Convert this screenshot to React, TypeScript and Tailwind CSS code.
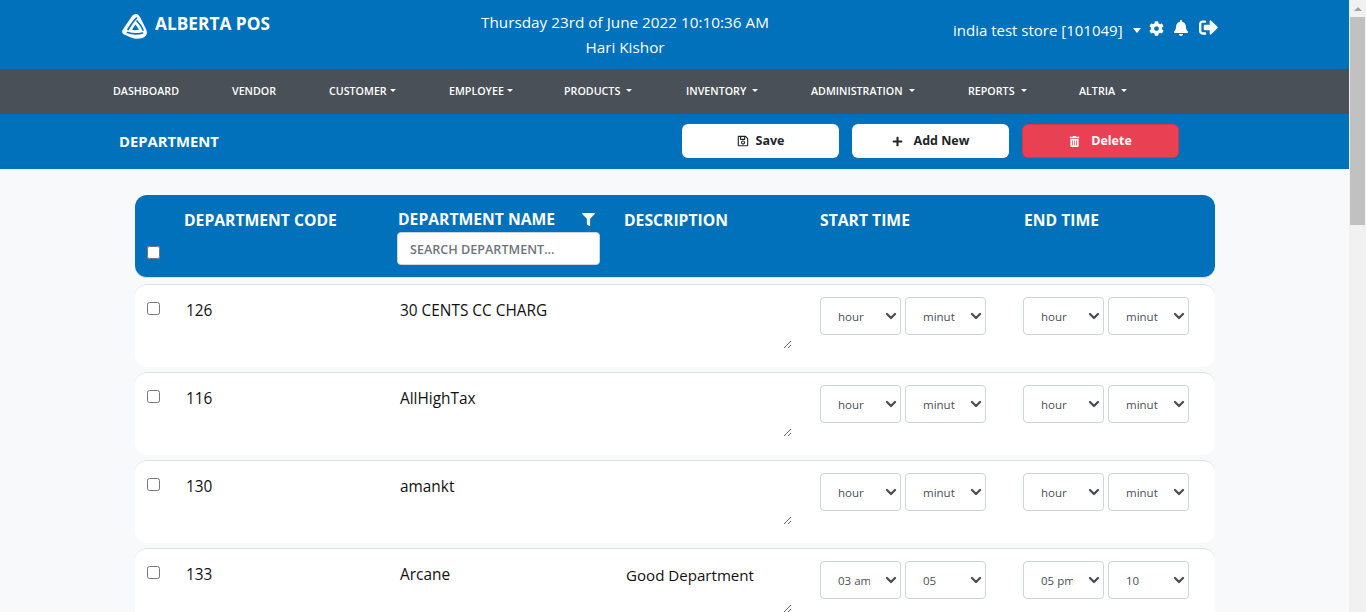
import { useState } from 'react'
import { ChevronDown } from 'lucide-react'
import { FaBell, FaCog, FaFilter, FaPlus, FaRegSave, FaSignOutAlt, FaTrashAlt } from 'react-icons/fa'

const NAV_ITEMS = [
  { label: 'DASHBOARD', width: 'w-[119px]', caret: false },
  { label: 'VENDOR', width: 'w-[97px]', caret: false },
  { label: 'CUSTOMER', width: 'w-[120px]', caret: true, tight: true },
  { label: 'EMPLOYEE', width: 'w-[115px]', caret: true, tight: true },
  { label: 'PRODUCTS', width: 'w-[122px]', caret: true },
  { label: 'INVENTORY', width: 'w-[125px]', caret: true },
  { label: 'ADMINISTRATION', width: 'w-[157px]', caret: true },
  { label: 'REPORTS', width: 'w-[111px]', caret: true },
  { label: 'ALTRIA', width: 'w-[60px]', caret: true },
]

const ROWS = [
  { code: '126', name: '30 CENTS CC CHARG', description: '', start: ['hour', 'minut'], end: ['hour', 'minut'] },
  { code: '116', name: 'AllHighTax', description: '', start: ['hour', 'minut'], end: ['hour', 'minut'] },
  { code: '130', name: 'amankt', description: '', start: ['hour', 'minut'], end: ['hour', 'minut'] },
  { code: '133', name: 'Arcane', description: 'Good Department', start: ['03 am', '05'], end: ['05 pm', '10'] },
]

function Logo() {
  return (
    <svg viewBox="0 0 25 25" className="h-[25px] w-[25px]" aria-hidden="true">
      <path
        fill="#fff"
        d="M14 0 C16 0 17 1.5 18.5 4 L24 15 C25.5 18 25 21 23 22.5 C20 25 14 25.5 9 23.5 L2 20.5 C0 19.5 -0.3 17.5 0.8 15.5 L10 2 C11 0.7 12.5 0 14 0 Z"
      />
      <g fill="none" stroke="#0071ba" strokeWidth="1.7" strokeLinecap="round">
        <path d="M14.5 4 C12 6.5 9 10.5 6 15.5" />
        <path d="M5.5 18.5 C10 20 15 20.5 20.5 19" />
        <path d="M21 16 C19.5 12.5 17.5 9.5 15 7" />
      </g>
      <path fill="#0071ba" d="M13.5 10.5 L17 15.5 C14.5 16.5 12 16.5 10 15.8 Z" />
    </svg>
  )
}

function Caret() {
  return <span className="ml-[3px] mb-[1px] inline-block h-0 w-0 border-x-[3.5px] border-t-[3.5px] border-x-transparent border-t-white align-middle" />
}

function TimeSelect({ value }: { value: string }) {
  return (
    <div className="relative h-[38px] w-[81px]">
      <select
        defaultValue={value}
        className="h-full w-full appearance-none rounded border border-[#ced4da] bg-white pt-px pr-[30px] pl-[17px] text-[11.5px] text-[#495057] outline-none"
      >
        <option>{value}</option>
      </select>
      <ChevronDown
        className="pointer-events-none absolute top-[11px] right-[2px] size-[16px] text-[#495057]"
        strokeWidth={3.5}
        aria-hidden="true"
      />
    </div>
  )
}

function Row({ row }: { row: (typeof ROWS)[number] }) {
  const [description, setDescription] = useState(row.description)
  return (
    <div className="grid h-[83px] shrink-0 grid-cols-[50px_214px_224px_197px_203px_1fr] rounded-xl border-t border-[#dee2e6] bg-white">
      <div className="pt-[17px] pl-[12px]">
        <input type="checkbox" className="block size-[13px]" />
      </div>
      <div className="pt-[14px] pl-px text-[15.4px] text-[#111]">{row.code}</div>
      <div className="pt-[14px] pl-px text-[15.4px] text-[#111]">{row.name}</div>
      <div className="pt-[15px]">
        <textarea
          value={description}
          onChange={(e) => setDescription(e.target.value)}
          className="block h-[49px] w-[169px] bg-transparent pl-[3px] text-[15.1px] leading-[22px] text-[#111] outline-none"
        />
      </div>
      <div className="flex gap-1 pt-[12px]">
        {row.start.map((v, i) => (
          <TimeSelect key={i} value={v} />
        ))}
      </div>
      <div className="flex gap-1 pt-[12px]">
        {row.end.map((v, i) => (
          <TimeSelect key={i} value={v} />
        ))}
      </div>
    </div>
  )
}

export default function App() {
  return (
    <div className="flex h-[612px] w-[1366px] overflow-hidden bg-[#f8f9fb] font-['Open_Sans',sans-serif]">
      <div className="flex min-w-0 flex-1 flex-col">
        {/* top bar */}
        <header className="flex h-[69px] shrink-0 bg-[#0071ba] text-white">
          <div className="flex w-[360px] items-start gap-[8px] pt-[14px] pl-[122px]">
            <Logo />
            <span className="-mt-[3px] text-[17.3px] font-bold">ALBERTA POS</span>
          </div>
          <div className="w-[530px] pt-[10px] text-center text-[15.3px] leading-[25px]">
            <div>Thursday 23rd of June 2022 10:10:36 AM</div>
            <div>Hari Kishor</div>
          </div>
          <div className="flex items-start pt-[19px] pl-[63px] text-[15px]">
            <span className="leading-[23px]">india test store [101049]</span>
            <span className="mt-[9px] ml-[10px] inline-block h-0 w-0 border-x-[4.5px] border-t-[5px] border-x-transparent border-t-white" />
            <FaCog className="mt-[2px] ml-[8px] size-[15px]" />
            <FaBell className="mt-[1px] ml-[9px] size-[16px]" />
            <FaSignOutAlt className="ml-[10px] size-[19px] -translate-y-[1px]" />
          </div>
        </header>

        {/* nav */}
        <nav className="flex h-[45px] shrink-0 items-center bg-[#495057] pl-[113px] text-[10.7px] font-semibold text-white">
          {NAV_ITEMS.map((item) => (
            <div key={item.label} className={`${item.width} flex shrink-0 items-center`}>
              {item.label}
              {item.caret && (
                <span className={`flex ${item.tight ? '' : 'ml-[3px]'}`}>
                  <Caret />
                </span>
              )}
            </div>
          ))}
        </nav>

        {/* page title and actions */}
        <div className="flex h-[55px] shrink-0 items-start bg-[#0071ba] pt-[10px] pl-[119px]">
          <h1 className="w-[563px] pt-[6px] text-[14.8px] font-bold text-white">DEPARTMENT</h1>
          <div className="flex gap-[13px] text-[12.5px] font-bold">
            <button type="button" className="flex h-[34px] w-[157px] items-center justify-center gap-[7px] rounded-md bg-white text-[#212529]">
              <FaRegSave className="size-[12px]" />
              Save
            </button>
            <button type="button" className="flex h-[34px] w-[157px] items-center justify-center gap-[11px] rounded-md bg-white text-[#212529]">
              <FaPlus className="size-[11px]" />
              Add New
            </button>
            <button type="button" className="flex h-[34px] w-[157px] items-center justify-center gap-[11px] rounded-md border border-[#dc3545] bg-[#ea4054] text-white">
              <FaTrashAlt className="size-[11px]" />
              Delete
            </button>
          </div>
        </div>

        {/* table */}
        <main className="flex min-h-0 flex-1 flex-col gap-[6px] overflow-hidden pt-[26px] pr-[134px] pl-[135px]">
          <div className="grid h-[83px] shrink-0 grid-cols-[49px_213px_227px_196px_1fr] rounded-xl border-b border-[#dee2e6] bg-[#0071ba] text-[15.7px] font-bold text-white">
            <div className="pt-[51px] pl-[12px]">
              <input type="checkbox" className="block size-[13px]" />
            </div>
            <div className="pt-[14px]">DEPARTMENT CODE</div>
            <div className="w-[203px] pt-[13px]">
              <div className="flex items-center justify-between pr-[5px] pl-px">
                <span>DEPARTMENT NAME</span>
                <FaFilter className="size-[13px]" />
              </div>
              <input
                placeholder="SEARCH DEPARTMENT..."
                className="h-[33px] w-full rounded border border-[#ced4da] bg-white px-[12px] pt-[2px] text-[12.6px] font-semibold text-[#495057] outline-none placeholder:text-[#6c757d]"
              />
            </div>
            <div className="pt-[14px]">DESCRIPTION</div>
            <div className="grid grid-cols-[204px_1fr] pt-[14px]">
              <span>START TIME</span>
              <span>END TIME</span>
            </div>
          </div>
          <div className="flex flex-col gap-[5px]">
            {ROWS.map((row) => (
              <Row key={row.code} row={row} />
            ))}
          </div>
        </main>
      </div>

      {/* scrollbar */}
      <div className="flex w-[17px] shrink-0 flex-col items-center bg-[#f1f1f1]">
        <div className="mt-[7px] h-0 w-0 border-x-[4px] border-b-[4px] border-x-transparent border-b-[#a3a3a3]" />
        <div className="mt-[6px] h-[208px] w-[15px] bg-[#c1c1c1]" />
      </div>
    </div>
  )
}
